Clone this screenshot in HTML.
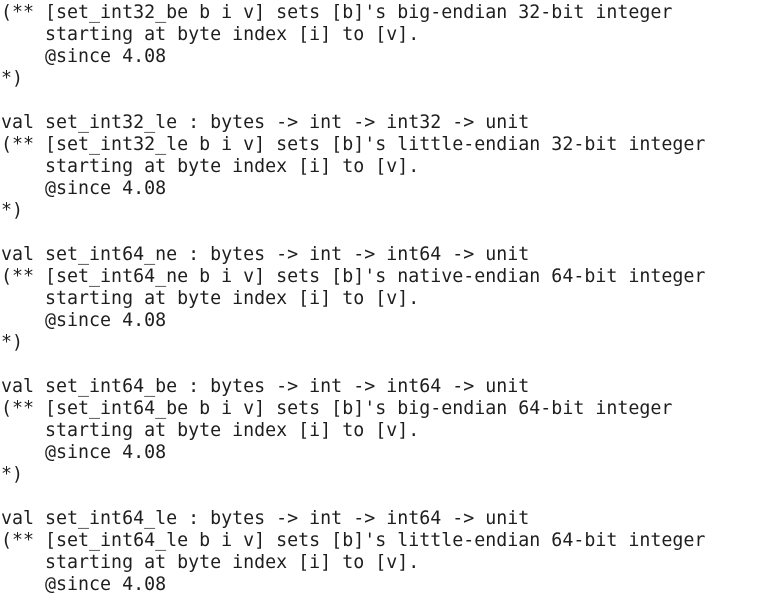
<!DOCTYPE html>
<html><head><meta charset="utf-8"><style>
html,body{margin:0;padding:0;background:#fff;width:782px;height:597px;overflow:hidden}
pre{margin:0;padding:2px 0 0 1px;font-family:"DejaVu Sans Mono","Liberation Mono",monospace;font-size:18.3px;line-height:22px;color:#1e1e1e}
</style></head><body><pre>(** [set_int32_be b i v] sets [b]'s big-endian 32-bit integer
    starting at byte index [i] to [v].
    @since 4.08
*)

val set_int32_le : bytes -&gt; int -&gt; int32 -&gt; unit
(** [set_int32_le b i v] sets [b]'s little-endian 32-bit integer
    starting at byte index [i] to [v].
    @since 4.08
*)

val set_int64_ne : bytes -&gt; int -&gt; int64 -&gt; unit
(** [set_int64_ne b i v] sets [b]'s native-endian 64-bit integer
    starting at byte index [i] to [v].
    @since 4.08
*)

val set_int64_be : bytes -&gt; int -&gt; int64 -&gt; unit
(** [set_int64_be b i v] sets [b]'s big-endian 64-bit integer
    starting at byte index [i] to [v].
    @since 4.08
*)

val set_int64_le : bytes -&gt; int -&gt; int64 -&gt; unit
(** [set_int64_le b i v] sets [b]'s little-endian 64-bit integer
    starting at byte index [i] to [v].
    @since 4.08
</pre></body></html>
